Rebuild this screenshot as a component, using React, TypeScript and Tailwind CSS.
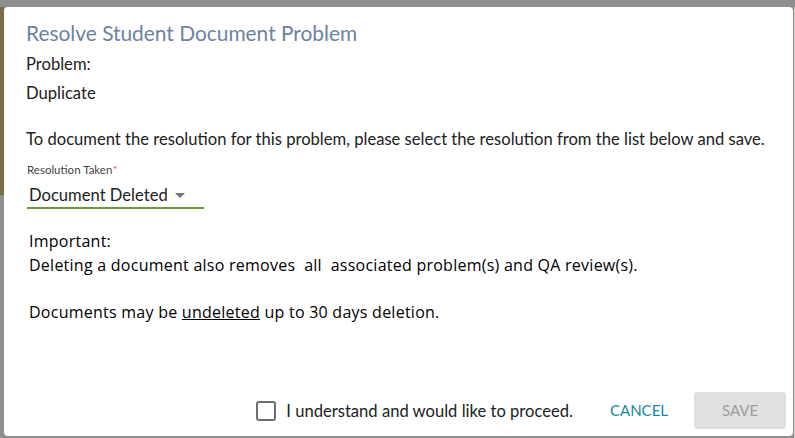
import React from "react";

function Caret() {
  return (
    <svg width="10" height="5" viewBox="0 0 10 5" className="ml-[7px] mt-[1px]">
      <path d="M0 0h10L5 5z" fill="#757575" />
    </svg>
  );
}

export default function App(): React.ReactElement {
  return (
    <div className="flex w-[795px] h-[438px] overflow-hidden bg-[#8f8f8f] font-['Lato','Liberation_Sans',sans-serif] text-[#212121]">
      {/* left page strip */}
      <div className="w-[4px] pt-[7px] flex flex-col">
        <div className="h-[188px] bg-[#7b6d43]" />
      </div>

      {/* Dialog */}
      <div className="mt-[7px] w-[789px] h-[429px] bg-white rounded-[4px] flex flex-col">
        <div className="px-[22px] pt-[14px] flex flex-col">
          <h2 className="text-[20.9px] leading-[24px] text-[#6c83a0]">Resolve Student Document Problem</h2>
          <p className="mt-[9px] text-[16.6px] leading-[20px]">Problem:</p>
          <p className="mt-[9px] text-[16.6px] leading-[20px]">Duplicate</p>
          <p className="mt-[26px] text-[16.6px] leading-[20px] whitespace-nowrap">
            To document the resolution for this problem, please select the resolution from the list below and save.
          </p>

          <label className="mt-[13px] ml-[1px] text-[11.5px] leading-[16px] text-[#444]">
            Resolution Taken<span className="text-[#d32f2f] text-[9px] align-top ml-[1px]">*</span>
          </label>
          <div className="mt-[6px] ml-[1px] w-[177px] pl-[2px] pb-[1px] border-b-2 border-[#6b9a2e] flex items-center">
            <span className="text-[16.6px] leading-[22px]">Document Deleted</span>
            <Caret />
          </div>

          <div className="mt-[21px] pl-[3px] text-[16px] leading-[23.5px] tracking-[0.25px] text-black font-['Open_Sans','Lato',sans-serif]">
            <p>Important:</p>
            <p className="whitespace-nowrap">
              Deleting a document also removes&nbsp; all&nbsp; associated problem(s) and QA review(s).
            </p>
            <p>&nbsp;</p>
            <p>
              Documents may be <span className="underline">undeleted</span> up to 30 days deletion.
            </p>
          </div>
        </div>

        <div className="flex-1" />

        {/* Footer */}
        <div className="flex items-center justify-end pr-[7px] pb-[7px]">
          <label className="flex items-center gap-[10px] mr-[24px]">
            <span className="w-[20px] h-[20px] border-2 border-[#6e6e6e] rounded-[3px]" />
            <span className="text-[16.6px] leading-[20px] whitespace-nowrap">I understand and would like to proceed.</span>
          </label>
          <button className="h-[37px] px-[13px] text-[15px] text-[#1589a6]">CANCEL</button>
          <button className="ml-[13px] h-[37px] w-[92px] rounded-[3px] bg-[#e0e0e0] text-[15px] text-[#9e9e9e]">
            SAVE
          </button>
        </div>
      </div>

      <div className="mt-[7px] w-[1px] bg-[#8f8f8f]" />
      <div className="mt-[7px] w-[1px] bg-[#d8d2bd]" />
    </div>
  );
}
